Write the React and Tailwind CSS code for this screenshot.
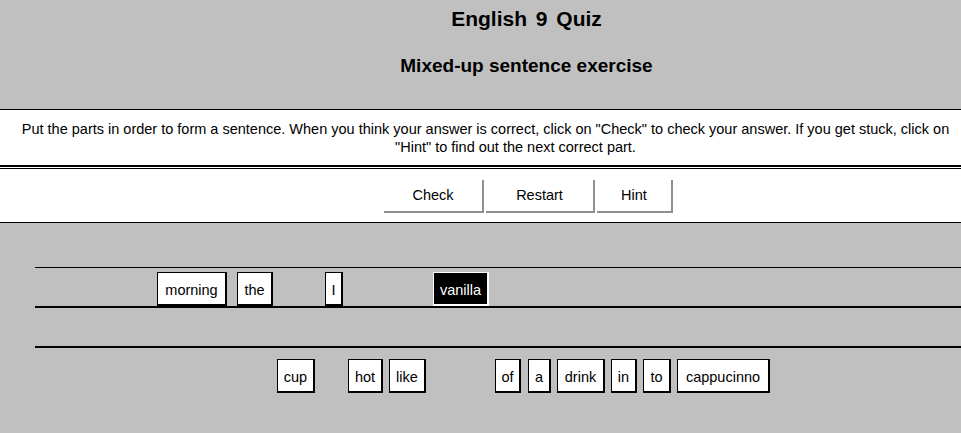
import React from 'react';

// word tiles of the mixed-up sentence, placed where they were dropped
const tiles = [
  { text: 'morning', cls: 'top-[49px] left-[157px] w-[70px]' },
  { text: 'the', cls: 'top-[49px] left-[237px] w-[36px]' },
  { text: 'I', cls: 'top-[49px] left-[325px] w-[18px]' },
  { text: 'vanilla', cls: 'top-[49px] left-[433px] w-[56px]', selected: true },
  { text: 'cup', cls: 'top-[136px] left-[277px] w-[38px]' },
  { text: 'hot', cls: 'top-[136px] left-[348px] w-[35px]' },
  { text: 'like', cls: 'top-[136px] left-[389px] w-[37px]' },
  { text: 'of', cls: 'top-[136px] left-[495px] w-[26px]' },
  { text: 'a', cls: 'top-[136px] left-[528px] w-[23px]' },
  { text: 'drink', cls: 'top-[136px] left-[557px] w-[48px]' },
  { text: 'in', cls: 'top-[136px] left-[611px] w-[26px]' },
  { text: 'to', cls: 'top-[136px] left-[643px] w-[28px]' },
  { text: 'cappucinno', cls: 'top-[136px] left-[677px] w-[93px]' },
];

const buttons = [
  { label: 'Check', cls: 'w-[100px]' },
  { label: 'Restart', cls: 'w-[109px]' },
  { label: 'Hint', cls: 'w-[76px]' },
];

export default function App() {
  return (
    <div className="w-[961px] h-[433px] overflow-hidden bg-[#c0c0c0] text-black font-['Liberation_Sans',Arial,sans-serif]">
      {/* Header */}
      <div className="h-[110px] border-b border-black pl-[92px] text-center font-bold">
        <h1 className="pt-[7px] text-[21px] leading-[24px] [word-spacing:3px]">English 9 Quiz</h1>
        <h2 className="mt-[24px] text-[19px] leading-[22px]">Mixed-up sentence exercise</h2>
      </div>

      {/* Instructions */}
      <div className="h-[55px] bg-white pt-[10px] pl-[10px] text-center text-[14.5px] leading-[18px]">
        <span className="block whitespace-nowrap">
          Put the parts in order to form a sentence. When you think your answer is correct, click on "Check" to check your answer. If you get stuck, click on
        </span>
        <span className="block whitespace-nowrap pl-[60px]">"Hint" to find out the next correct part.</span>
      </div>
      <div className="h-[2px] bg-black" />
      <div className="h-px bg-white" />
      <div className="h-px bg-black" />

      {/* Buttons */}
      <div className="h-[54px] bg-white border-b border-black flex justify-center gap-[2px] pl-[96px] pt-[11px]">
        {buttons.map((b) => (
          <button
            key={b.label}
            className={`h-[33px] ${b.cls} bg-white border-r-2 border-b-2 border-[#8f8f8f] text-[14.5px] leading-none`}
          >
            {b.label}
          </button>
        ))}
      </div>

      {/* Drop area */}
      <div className="relative h-[210px] pt-[44px]">
        <div className="ml-[35px] h-px bg-black" />
        <div className="ml-[35px] mt-[38px] h-[2px] bg-black" />
        <div className="ml-[35px] mt-[38px] h-[2px] bg-black" />

        {tiles.map((t) => (
          <div
            key={t.text}
            className={`absolute h-[34px] ${t.cls} flex items-center justify-center pt-[3px] border border-r-2 border-b-2 text-[14.5px] leading-none ${
              t.selected ? 'bg-black text-white border-white' : 'bg-white text-black border-black'
            }`}
          >
            {t.text}
          </div>
        ))}
      </div>
    </div>
  );
}
